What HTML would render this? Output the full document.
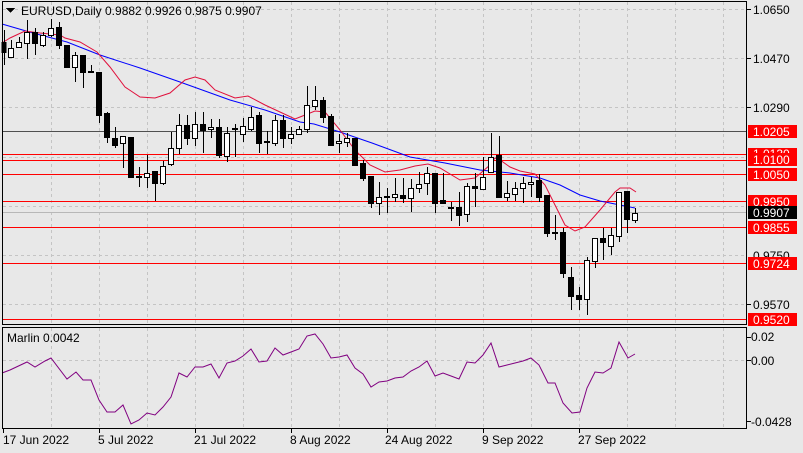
<!DOCTYPE html>
<html><head><meta charset="utf-8"><style>
html,body{margin:0;padding:0;background:#e8e8e8;}
svg{display:block;font-family:"Liberation Sans",sans-serif;font-size:12px;}
</style></head><body>
<svg width="803" height="453" viewBox="0 0 803 453" xmlns="http://www.w3.org/2000/svg" shape-rendering="crispEdges">
<rect width="803" height="453" fill="#e8e8e8"/>
<!-- grid -->
<g stroke="#c4c4c4" stroke-dasharray="3,3" stroke-width="1">
<path d="M51.5 2V325M99.5 2V325M147.5 2V325M195.5 2V325M243.5 2V325M291.5 2V325M339.5 2V325M387.5 2V325M435.5 2V325M483.5 2V325M531.5 2V325M579.5 2V325M627.5 2V325M675.5 2V325M723.5 2V325"/>
<path d="M51.5 328V428M99.5 328V428M147.5 328V428M195.5 328V428M243.5 328V428M291.5 328V428M339.5 328V428M387.5 328V428M435.5 328V428M483.5 328V428M531.5 328V428M579.5 328V428M627.5 328V428M675.5 328V428M723.5 328V428"/>
<path d="M3 9.5H746M3 58.5H746M3 107.5H746M3 157.5H746M3 206.5H746M3 255.5H746M3 304.5H746M3 360.5H746"/>
</g>
<!-- current price line -->
<line x1="3" x2="746" y1="212.5" y2="212.5" stroke="#b8b8b8"/>
<!-- levels -->
<g stroke="#ff0000" stroke-width="1">
<line x1="3" x2="746" y1="131.5" y2="131.5" stroke="#505050"/>
<line x1="3" x2="746" y1="154.5" y2="154.5"/>
<line x1="3" x2="746" y1="160.5" y2="160.5"/>
<line x1="3" x2="746" y1="174.5" y2="174.5"/>
<line x1="3" x2="746" y1="201.5" y2="201.5"/>
<line x1="3" x2="746" y1="227.5" y2="227.5"/>
<line x1="3" x2="746" y1="263.5" y2="263.5"/>
<line x1="3" x2="746" y1="319.5" y2="319.5"/>
</g>
<!-- MAs -->
<g fill="none" shape-rendering="auto" stroke-width="1">
<polyline stroke="#0000ff" points="2,24 33,33 67,42 100,55 140,68 180,82 230,100 265,110 300,122 314,124 340,132 372,143 410,157 445,163 480,170 510,173 540,178 560,185 580,195 600,201 620,205 635,208"/>
<polyline stroke="#e0103c" points="2,43 10,38 25,31 40,33 60,35 65,38 80,42 97,52 110,67 125,87 140,97 155,98 170,93 185,80 195,77 205,80 215,90 235,98 248,96 265,105 280,112 295,119 300,117 315,111 325,112 340,130 355,150 370,165 385,172 400,170 415,166 428,164 440,168 460,180 475,178 490,165 495,158 500,160 510,167 520,171 535,174 545,185 555,205 565,225 575,231 585,227 600,210 615,192 620,188 630,188 636,192"/>
</g>
<!-- candles -->
<g stroke="#000" stroke-width="1">
<path d="M4.5 30V65M11.5 40V58M19.5 37V48M27.5 20V59M35.5 28V55M43.5 32V47M51.5 19V37M59.5 22V49M67.5 45V68M75.5 52V82M83.5 55V88M91.5 65V73M99.5 72V123M107.5 112V143M115.5 127V148M123.5 136V168M131.5 137V178M139.5 167V187M147.5 155V188M155.5 171V201M163.5 161V185M171.5 132V166M179.5 114V154M187.5 115V145M195.5 112V146M203.5 112V153M211.5 119V138M219.5 119V158M227.5 127V162M235.5 124V157M243.5 118V142M251.5 107V131M259.5 112V153M267.5 131V154M275.5 115V146M283.5 115V148M291.5 127V144M299.5 126V135M307.5 86V133M315.5 86V110M323.5 97V123M331.5 114V146M339.5 134V153M347.5 133V147M355.5 138V166M363.5 160V181M371.5 176V208M379.5 182V215M387.5 188V213M395.5 178V202M403.5 178V203M411.5 179V212M419.5 172V193M427.5 167V195M435.5 173V213M443.5 173V203M451.5 202V221M459.5 192V226M467.5 183V222M475.5 173V207M483.5 157V190M491.5 133V172M499.5 136V197M507.5 181V201M515.5 182V201M523.5 177V203M531.5 177V197M539.5 174V202M547.5 195V237M555.5 215V240M563.5 228V278M571.5 267V310M579.5 287V310M587.5 257V315M595.5 238V268M603.5 228V260M611.5 228V255M619.5 192V242M627.5 191V233M635.5 208V223"/>
<g fill="#000">
<rect x="2" y="42.5" width="4" height="10"/>
<rect x="32.5" y="32.5" width="5" height="11"/>
<rect x="56.5" y="27.5" width="5" height="18"/>
<rect x="64.5" y="45.5" width="5" height="22"/>
<rect x="80.5" y="55.5" width="5" height="17"/>
<rect x="88.5" y="71.5" width="5" height="1"/>
<rect x="96.5" y="72.5" width="5" height="43"/>
<rect x="104.5" y="113.5" width="5" height="24"/>
<rect x="112.5" y="138.5" width="5" height="7"/>
<rect x="128.5" y="137.5" width="5" height="40"/>
<rect x="136.5" y="176.5" width="5" height="1"/>
<rect x="152.5" y="171.5" width="5" height="12"/>
<rect x="184.5" y="125.5" width="5" height="13"/>
<rect x="200.5" y="124.5" width="5" height="6"/>
<rect x="216.5" y="127.5" width="5" height="28"/>
<rect x="232.5" y="128.5" width="5" height="1"/>
<rect x="256.5" y="115.5" width="5" height="28"/>
<rect x="264.5" y="141.5" width="5" height="1"/>
<rect x="280.5" y="120.5" width="5" height="18"/>
<rect x="320.5" y="100.5" width="5" height="17"/>
<rect x="328.5" y="116.5" width="5" height="29"/>
<rect x="352.5" y="138.5" width="5" height="27"/>
<rect x="360.5" y="163.5" width="5" height="15"/>
<rect x="368.5" y="176.5" width="5" height="27"/>
<rect x="384.5" y="196.5" width="5" height="1"/>
<rect x="400.5" y="195.5" width="5" height="3"/>
<rect x="432.5" y="173.5" width="5" height="30"/>
<rect x="440.5" y="200.5" width="5" height="3"/>
<rect x="448.5" y="207.5" width="5" height="1"/>
<rect x="456.5" y="207.5" width="5" height="8"/>
<rect x="472.5" y="186.5" width="5" height="2"/>
<rect x="496.5" y="155.5" width="5" height="42"/>
<rect x="536.5" y="180.5" width="5" height="17"/>
<rect x="544.5" y="195.5" width="5" height="38"/>
<rect x="552.5" y="232.5" width="5" height="1"/>
<rect x="560.5" y="232.5" width="5" height="41"/>
<rect x="568.5" y="277.5" width="5" height="19"/>
<rect x="576.5" y="295.5" width="5" height="4"/>
<rect x="600.5" y="238.5" width="5" height="4"/>
<rect x="624.5" y="191.5" width="5" height="28"/>
</g>
<g fill="#fff">
<rect x="8.5" y="48.5" width="5" height="9"/>
<rect x="16.5" y="42.5" width="5" height="5"/>
<rect x="24.5" y="32.5" width="5" height="11"/>
<rect x="40.5" y="35.5" width="5" height="10"/>
<rect x="48.5" y="28.5" width="5" height="7"/>
<rect x="72.5" y="55.5" width="5" height="12"/>
<rect x="120.5" y="136.5" width="5" height="7"/>
<rect x="144.5" y="173.5" width="5" height="4"/>
<rect x="160.5" y="166.5" width="5" height="17"/>
<rect x="168.5" y="148.5" width="5" height="16"/>
<rect x="176.5" y="125.5" width="5" height="23"/>
<rect x="192.5" y="124.5" width="5" height="14"/>
<rect x="208.5" y="127.5" width="5" height="2"/>
<rect x="224.5" y="133.5" width="5" height="23"/>
<rect x="240.5" y="126.5" width="5" height="8"/>
<rect x="248.5" y="117.5" width="5" height="12"/>
<rect x="272.5" y="120.5" width="5" height="23"/>
<rect x="288.5" y="134.5" width="5" height="4"/>
<rect x="296.5" y="129.5" width="5" height="5"/>
<rect x="304.5" y="105.5" width="5" height="24"/>
<rect x="312.5" y="100.5" width="5" height="6"/>
<rect x="336.5" y="141.5" width="5" height="2"/>
<rect x="344.5" y="138.5" width="5" height="4"/>
<rect x="376.5" y="197.5" width="5" height="6"/>
<rect x="392.5" y="194.5" width="5" height="3"/>
<rect x="408.5" y="188.5" width="5" height="10"/>
<rect x="416.5" y="184.5" width="5" height="4"/>
<rect x="424.5" y="173.5" width="5" height="10"/>
<rect x="464.5" y="186.5" width="5" height="28"/>
<rect x="480.5" y="177.5" width="5" height="12"/>
<rect x="488.5" y="157.5" width="5" height="15"/>
<rect x="504.5" y="193.5" width="5" height="4"/>
<rect x="512.5" y="188.5" width="5" height="6"/>
<rect x="520.5" y="183.5" width="5" height="5"/>
<rect x="528.5" y="182.5" width="5" height="2"/>
<rect x="584.5" y="260.5" width="5" height="39"/>
<rect x="592.5" y="238.5" width="5" height="23"/>
<rect x="608.5" y="235.5" width="5" height="11"/>
<rect x="616.5" y="192.5" width="5" height="44"/>
<rect x="632.5" y="213.5" width="5" height="7"/>
</g>
</g>
<!-- indicator line -->
<polyline fill="none" stroke="#800080" stroke-width="1" shape-rendering="auto" points="2,373 10,370 27,362 35,367 45,361 51,358 67,379 76,372 83,380 91,380 99,400 107,412 115,412 123,405 131,424 139,420 147,413 155,415 163,407 171,397 179,373 187,377 195,367 203,367 211,364 219,378 227,363 235,361 243,356 251,349 259,362 267,361 275,348 283,355 291,352 299,349 307,336 315,334 323,344 331,358 339,357 347,355 355,368 363,374 371,387 379,382 387,381 395,378 403,377 411,371 419,367 427,361 435,376 443,373 451,376 459,379 467,362 475,363 483,355 491,343 499,367 507,365 515,363 523,361 531,358 539,365 548,383 555,383 563,403 572,413 580,412 587,388 595,372 603,373 611,368 619,342 628,358 635,354"/>
<!-- frames -->
<g fill="none" stroke="#000" stroke-width="1">
<rect x="2.5" y="1.5" width="744" height="323"/>
<rect x="2.5" y="327.5" width="744" height="101"/>
</g>
<g stroke="#000"><path d="M747 9.5h4M747 58.5h4M747 107.5h4M747 304.5h4M747 337.5h4M747 360.5h4M747 421.5h4M3.5 429v4M99.5 429v4M195.5 429v4M291.5 429v4M387.5 429v4M483.5 429v4M579.5 429v4"/></g>
<!-- title -->
<path d="M6 8h9l-4.5 5z" fill="#000"/>
<text x="21" y="15" fill="#000">EURUSD,Daily  0.9882 0.9926 0.9875 0.9907</text>
<text x="7" y="342" fill="#000">Marlin 0.0042</text>
<!-- price axis -->
<g fill="#000">
<text x="753" y="14">1.0650</text>
<text x="753" y="63">1.0470</text>
<text x="753" y="112">1.0290</text>
<text x="753" y="260">0.9750</text>
<text x="753" y="309">0.9570</text>
<text x="751" y="341">0.02</text>
<text x="751" y="365">0.00</text>
<text x="751" y="426">-0.0428</text>
</g>
<g fill="#ff0000">
<rect x="748" y="125" width="49" height="13"/>
<rect x="748" y="148" width="49" height="13"/>
<rect x="748" y="153" width="49" height="13"/>
<rect x="748" y="168" width="49" height="13"/>
<rect x="748" y="195" width="49" height="13"/>
<rect x="748" y="221" width="49" height="13"/>
<rect x="748" y="257" width="49" height="13"/>
<rect x="748" y="313" width="49" height="13"/>
</g>
<rect x="748" y="206" width="49" height="13" fill="#000"/>
<g fill="#fff">
<text x="753" y="136">1.0205</text>
<text x="753" y="158">1.0130</text>
<text x="753" y="164">1.0100</text>
<text x="753" y="179">1.0050</text>
<text x="753" y="206">0.9950</text>
<text x="753" y="217">0.9907</text>
<text x="753" y="232">0.9855</text>
<text x="753" y="268">0.9724</text>
<text x="753" y="324">0.9520</text>
</g>
<rect x="748" y="153" width="49" height="13" fill="#ff0000"/>
<text x="753" y="164" fill="#fff">1.0100</text>
<!-- date axis -->
<g fill="#000">
<text x="3" y="444">17 Jun 2022</text>
<text x="98" y="444">5 Jul 2022</text>
<text x="194" y="444">21 Jul 2022</text>
<text x="290" y="444">8 Aug 2022</text>
<text x="385" y="444">24 Aug 2022</text>
<text x="482" y="444">9 Sep 2022</text>
<text x="578" y="444">27 Sep 2022</text>
</g>
</svg>
</body></html>
